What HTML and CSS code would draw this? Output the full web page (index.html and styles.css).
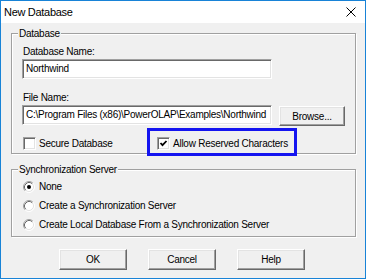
FILE: index.html
```html
<!DOCTYPE html>
<html>
<head>
<meta charset="utf-8">
<title>New Database</title>
<link rel="stylesheet" href="styles.css">
</head>
<body>
<div class="window">
  <div class="titlebar">
    <span class="title">New Database</span>
    <svg class="close" width="10" height="10" viewBox="0 0 10 10"><path d="M0.5 0.5L9.5 9.5M9.5 0.5L0.5 9.5" stroke="#000" stroke-width="1" fill="none"/></svg>
  </div>
  <div class="client">
    <fieldset class="group group-db">
      <legend>Database</legend>
      <div class="label">Database Name:</div>
      <div class="textbox">Northwind</div>
      <div class="label label-file">File Name:</div>
      <div class="file-row">
        <div class="textbox">C:\Program Files (x86)\PowerOLAP\Examples\Northwind</div>
        <div class="btn btn-browse">Browse...</div>
      </div>
      <div class="check-row">
        <div class="check"><span class="box"></span><span>Secure Database</span></div>
        <div class="check allow"><span class="box"><svg width="9" height="9" viewBox="0 0 9 9"><polyline points="1.5,4 3.5,6.2 7.5,2" fill="none" stroke="#000" stroke-width="1.8"/></svg></span><span>Allow Reserved Characters</span></div>
      </div>
    </fieldset>
    <fieldset class="group group-sync">
      <legend>Synchronization Server</legend>
      <div class="radio-row">
        <svg class="radio" width="12" height="12" viewBox="0 0 12 12"><circle cx="6" cy="6" r="5" fill="#fff"/><path d="M2.11 9.89A5.5 5.5 0 0 1 9.89 2.11" stroke="#a0a0a0" fill="none"/><path d="M9.89 2.11A5.5 5.5 0 0 1 2.11 9.89" stroke="#fff" fill="none"/><path d="M2.82 9.18A4.5 4.5 0 0 1 9.18 2.82" stroke="#696969" fill="none"/><path d="M9.18 2.82A4.5 4.5 0 0 1 2.82 9.18" stroke="#e3e3e3" fill="none"/><circle cx="6" cy="6" r="2" fill="#000"/></svg>
        <span>None</span>
      </div>
      <div class="radio-row">
        <svg class="radio" width="12" height="12" viewBox="0 0 12 12"><circle cx="6" cy="6" r="5" fill="#fff"/><path d="M2.11 9.89A5.5 5.5 0 0 1 9.89 2.11" stroke="#a0a0a0" fill="none"/><path d="M9.89 2.11A5.5 5.5 0 0 1 2.11 9.89" stroke="#fff" fill="none"/><path d="M2.82 9.18A4.5 4.5 0 0 1 9.18 2.82" stroke="#696969" fill="none"/><path d="M9.18 2.82A4.5 4.5 0 0 1 2.82 9.18" stroke="#e3e3e3" fill="none"/></svg>
        <span>Create a Synchronization Server</span>
      </div>
      <div class="radio-row">
        <svg class="radio" width="12" height="12" viewBox="0 0 12 12"><circle cx="6" cy="6" r="5" fill="#fff"/><path d="M2.11 9.89A5.5 5.5 0 0 1 9.89 2.11" stroke="#a0a0a0" fill="none"/><path d="M9.89 2.11A5.5 5.5 0 0 1 2.11 9.89" stroke="#fff" fill="none"/><path d="M2.82 9.18A4.5 4.5 0 0 1 9.18 2.82" stroke="#696969" fill="none"/><path d="M9.18 2.82A4.5 4.5 0 0 1 2.82 9.18" stroke="#e3e3e3" fill="none"/></svg>
        <span>Create Local Database From a Synchronization Server</span>
      </div>
    </fieldset>
    <div class="buttons">
      <div class="btn btn-main">OK</div>
      <div class="btn btn-main">Cancel</div>
      <div class="btn btn-main">Help</div>
    </div>
  </div>
</div>
</body>
</html>
```

FILE: styles.css
```css
html, body {
  margin: 0;
  padding: 0;
  background: #f0f0f0;
}

.window {
  width: 366px;
  height: 279px;
  box-sizing: border-box;
  border: 1px solid #1883d7;
  background: #f0f0f0;
  display: flex;
  flex-direction: column;
  font-family: "Liberation Sans", Arial, sans-serif;
  font-size: 10px;
  line-height: 13px;
  letter-spacing: -0.25px;
  color: #000;
  overflow: hidden;
}

.titlebar {
  flex: none;
  height: 22px;
  background: #fff;
  display: flex;
  align-items: center;
  justify-content: space-between;
  padding: 0 9px 0 3px;
}

.title {
  font-size: 11px;
  letter-spacing: -0.3px;
}

.close {
  display: block;
}

.client {
  flex: 1;
  padding: 4px 9px 0 10px;
}

.group {
  margin: 0;
  border: 1px solid #a0a0a0;
  box-shadow: inset 1px 1px 0 #fff, 1px 1px 0 #fff;
  min-inline-size: 0;
}

.group legend {
  padding: 0 1px;
  margin-left: -4px;
  background: #f0f0f0;
  line-height: 13px;
}

.group-db {
  padding: 5px 9px 3px 10px;
}

.group-sync {
  margin-top: 9px;
  padding: 4px 9px 5px 10px;
}

.label {
  padding-left: 1px;
}

.label-file {
  margin-top: 12px;
}

.textbox {
  width: 250px;
  height: 20px;
  box-sizing: border-box;
  margin-top: 1px;
  background: #fff;
  border: 1px solid;
  border-color: #a0a0a0 #fff #fff #a0a0a0;
  box-shadow: inset 1px 1px 0 #696969, inset -1px -1px 0 #e3e3e3;
  padding-left: 3px;
  line-height: 18px;
  white-space: nowrap;
  overflow: hidden;
}

.file-row {
  display: flex;
  align-items: flex-start;
}

.file-row .textbox {
  flex: none;
}

.btn {
  box-sizing: border-box;
  background: #f0f0f0;
  border: 1px solid;
  border-color: #fff #696969 #696969 #fff;
  box-shadow: inset -1px -1px 0 #a0a0a0, inset 1px 1px 0 #e3e3e3;
  display: flex;
  align-items: center;
  justify-content: center;
}

.btn-browse {
  width: 66px;
  height: 20px;
  margin-left: 7px;
  margin-top: 2px;
}

.check-row {
  display: grid;
  grid-template-columns: 134px auto;
  margin-top: 11px;
  height: 13px;
}

.check {
  display: inline-flex;
  align-items: center;
  gap: 3px;
  padding-left: 1px;
  height: 13px;
  justify-self: start;
}

.box {
  flex: none;
  width: 13px;
  height: 13px;
  box-sizing: border-box;
  background: #fff;
  border: 1px solid;
  border-color: #a0a0a0 #fff #fff #a0a0a0;
  box-shadow: inset 1px 1px 0 #696969, inset -1px -1px 0 #e3e3e3;
  display: flex;
  align-items: center;
  justify-content: center;
}

.box svg {
  display: block;
}

.allow {
  position: relative;
}

.allow::after {
  content: "";
  position: absolute;
  left: -9px;
  top: -9px;
  width: 150px;
  height: 28px;
  box-sizing: border-box;
  border: 3px solid #1414f0;
  pointer-events: none;
}

.radio-row {
  display: flex;
  align-items: center;
  gap: 4px;
  height: 13px;
}

.radio-row + .radio-row {
  margin-top: 6px;
}

.radio {
  display: block;
  margin-left: 1px;
  flex: none;
}

.buttons {
  display: flex;
  justify-content: center;
  gap: 21px;
  margin-top: 12px;
  padding-right: 3px;
}

.btn-main {
  width: 68px;
  height: 21px;
}
```
